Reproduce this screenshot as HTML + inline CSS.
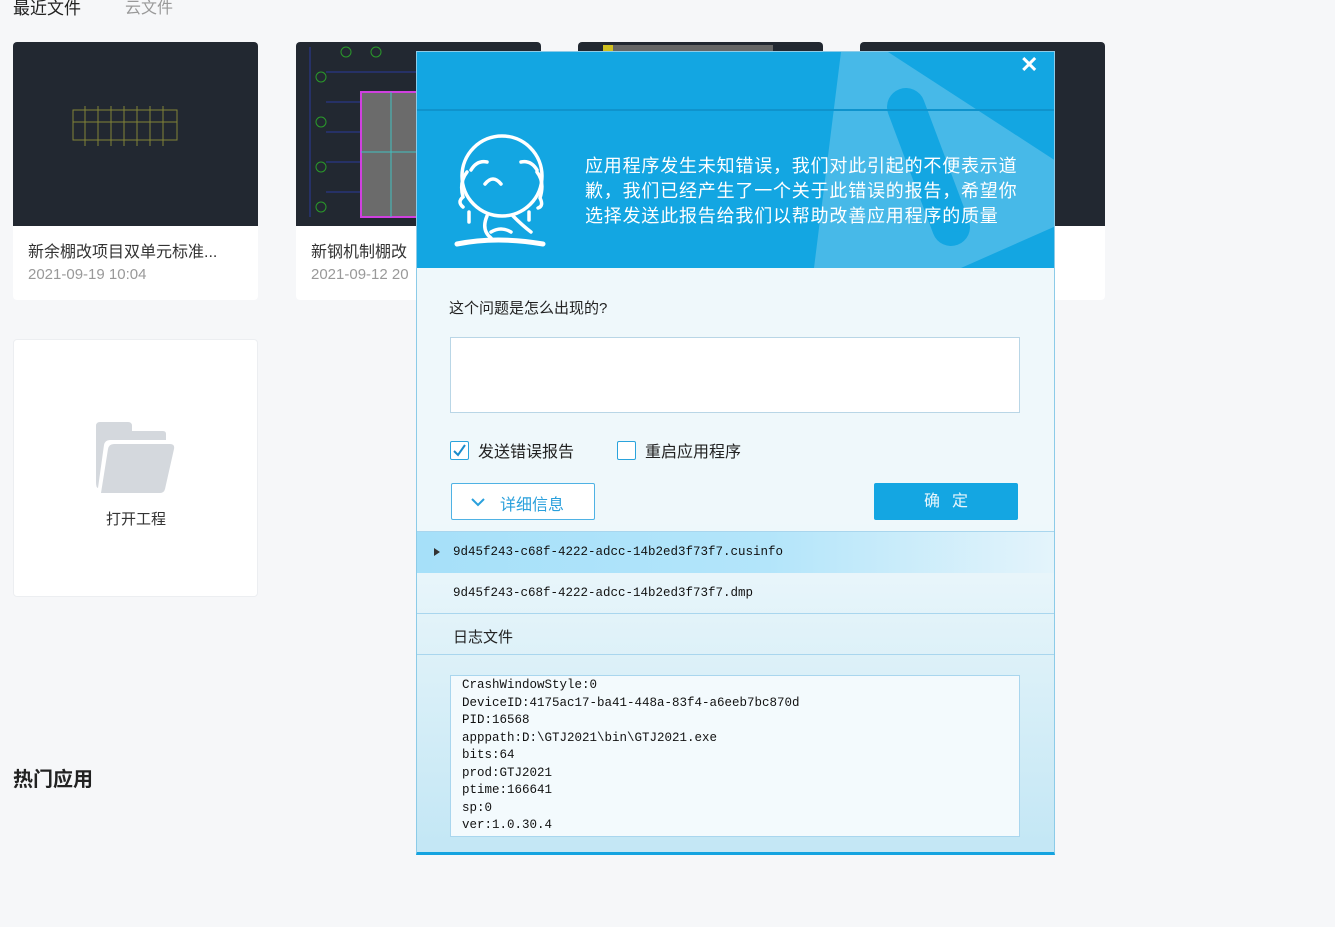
<!DOCTYPE html>
<html><head><meta charset="utf-8"><style>
*{margin:0;padding:0;box-sizing:border-box}
body{width:1335px;height:927px;background:#f6f7f9;position:relative;overflow:hidden;font-family:"Liberation Sans","Noto Sans CJK SC",sans-serif;color:#333}
.abs{position:absolute}
.card{position:absolute;top:42px;width:245px;height:258px;background:#fff;border-radius:4px;overflow:hidden}
.thumb{height:184px;background:#222831}
.t1{position:absolute;left:15px;top:196px;font-size:16px;color:#333;white-space:nowrap}
.t2{position:absolute;left:15px;top:224px;font-size:15px;color:#999}
.mono{font-family:"Liberation Mono","Noto Serif CJK SC",monospace;font-size:12.5px;color:#111}
</style></head><body>
<div class="abs" style="left:13px;top:-6px;font-size:17px;color:#222">最近文件</div>
<div class="abs" style="left:125px;top:-6px;font-size:16px;color:#999">云文件</div>

<div class="card" style="left:13px"><div class="thumb">
<svg width="245" height="184"><g stroke="#9a9a3a" stroke-width="1" fill="none" opacity=".8"><rect x="60" y="68" width="104" height="30"/><path d="M72 64v40M85 64v40M98 64v40M111 64v40M124 64v40M137 64v40M150 64v40M60 80h104"/></g></svg>
</div><div class="t1">新余棚改项目双单元标准...</div><div class="t2">2021-09-19 10:04</div></div>

<div class="card" style="left:296px"><div class="thumb" style="position:relative">
<svg width="245" height="184"><g stroke="#2b3a9a" fill="none"><path d="M14 5v170M30 30h210M30 60h210M30 90h210M30 120h210M30 150h210"/></g><rect x="65" y="50" width="120" height="125" fill="#6b6b6b"/><rect x="65" y="50" width="120" height="125" fill="none" stroke="#d040e0" stroke-width="2"/><g stroke="#40c0c0"><path d="M95 50v125M65 110h120"/></g><g fill="none" stroke="#2a9a2a"><circle cx="25" cy="35" r="5"/><circle cx="25" cy="80" r="5"/><circle cx="25" cy="125" r="5"/><circle cx="25" cy="165" r="5"/><circle cx="50" cy="10" r="5"/><circle cx="80" cy="10" r="5"/></g></svg>
</div><div class="t1">新钢机制棚改</div><div class="t2">2021-09-12 20</div></div>

<div class="card" style="left:578px"><div class="thumb"><svg width="245" height="20"><rect x="25" y="3" width="10" height="10" fill="#d0c020"/><rect x="35" y="3" width="160" height="10" fill="#666"/></svg></div></div>
<div class="card" style="left:860px"><div class="thumb"></div></div>

<div class="abs" style="left:13px;top:339px;width:245px;height:258px;background:#fff;border:1px solid #eceef1;border-radius:4px">
<svg class="abs" style="left:82px;top:82px" width="82" height="72"><path d="M0 4q0-4 4-4h28q4 0 4 4v5h31q3 0 3 3v6H14q-5 0-6 5L2 66Q0 66 0 60z" fill="#d4d8dd"/><path d="M12 27q1-5 6-5h56q5 0 4 5l-9 40q-1 4-5 4H5z" fill="#d4d8dd"/></svg>
<div class="abs" style="left:92px;top:168px;font-size:15px;color:#333">打开工程</div></div>

<div class="abs" style="left:13px;top:763px;font-size:20px;font-weight:bold;color:#222">热门应用</div>

<div class="abs" style="left:416px;top:51px;width:639px;height:804px;background:linear-gradient(#eff8fb 0,#eff8fb 470px,#c4e7f5 790px);border:1px solid #8ccbe8;border-bottom:3px solid #14a3e0;overflow:hidden">
 <div class="abs" style="left:0;top:0;width:639px;height:216px;background:#13a6e2;overflow:hidden">
  <svg class="abs" style="left:0;top:0" width="639" height="216"><polygon points="424,0 471,0 639,109 639,174 544,216 397,216" fill="#47b9e8"/><path d="M489 55 L534 175" stroke="#13a6e2" stroke-width="38" stroke-linecap="round"/><circle cx="540" cy="170" r="10" fill="#13a6e2"/><rect x="0" y="57" width="639" height="2" fill="#0f93cc"/></svg>
  <div class="abs" style="left:603px;top:0px;font-size:22px;font-weight:bold;color:#fff">✕</div>
  <svg class="abs" style="left:32px;top:80px" width="105" height="118" fill="none" stroke="#fff" stroke-width="3.5" stroke-linecap="round"><circle cx="53" cy="44" r="40"/><path d="M18 40q-8 10 -4 25q-6 5 0 10M88 40q8 10 3 26q4 8-2 10"/><path d="M22 38q6-10 16-8M72 30q10-2 16 8"/><path d="M36 52q8-10 16 0"/><path d="M20 80v10M80 80v8"/><path d="M38 84q-6 14 4 22M64 84q10 10 18 16M42 100q10-6 20 0"/><path d="M8 112q40-8 86 0" stroke-width="5"/></svg>
  <div class="abs" style="left:168px;top:102px;width:450px;font-size:18px;letter-spacing:.8px;line-height:25px;color:#fff">应用程序发生未知错误，我们对此引起的不便表示道歉，我们已经产生了一个关于此错误的报告，希望你选择发送此报告给我们以帮助改善应用程序的质量</div>
 </div>
 <div class="abs" style="left:32px;top:245px;font-size:15px;color:#222">这个问题是怎么出现的?</div>
 <div class="abs" style="left:33px;top:285px;width:570px;height:76px;background:#fff;border:1px solid #b9d6e6"></div>
 <div class="abs" style="left:33px;top:389px;width:19px;height:19px;border:1px solid #2aa3dc;background:#fff;border-radius:2px"><svg width="17" height="17"><path d="M3 9l4 4 7-10" stroke="#1a8ccc" stroke-width="2" fill="none"/></svg></div>
 <div class="abs" style="left:61px;top:386px;font-size:16px;color:#222">发送错误报告</div>
 <div class="abs" style="left:200px;top:389px;width:19px;height:19px;border:1px solid #2aa3dc;background:#fff;border-radius:2px"></div>
 <div class="abs" style="left:228px;top:386px;font-size:16px;color:#222">重启应用程序</div>
 <div class="abs" style="left:34px;top:431px;width:144px;height:37px;border:1px solid #4fb2e4;border-radius:2px;background:#fff"><svg class="abs" style="left:18px;top:13px" width="16" height="10"><path d="M2 2l6 6 6-6" stroke="#2aa0dc" stroke-width="2" fill="none"/></svg><div class="abs" style="left:48px;top:7px;font-size:16px;color:#2aa0dc">详细信息</div></div>
 <div class="abs" style="left:457px;top:431px;width:144px;height:37px;background:#14a6e2;border-radius:2px;color:#e8f6fc;font-size:16px;text-align:center;line-height:37px;letter-spacing:12px;padding-left:12px">确定</div>
 <div class="abs" style="left:0;top:479px;width:639px;height:1px;background:#a9d6ee"></div>
 <div class="abs" style="left:0;top:480px;width:639px;height:41px;background:linear-gradient(90deg,#a6e0f9,#b3e5fa 55%,#e4f4fb)"></div>
 <div class="abs" style="left:17px;top:496px;width:0;height:0;border-left:6px solid #333;border-top:4px solid transparent;border-bottom:4px solid transparent"></div>
 <div class="abs mono" style="left:36px;top:493px">9d45f243-c68f-4222-adcc-14b2ed3f73f7.cusinfo</div>
 <div class="abs mono" style="left:36px;top:534px">9d45f243-c68f-4222-adcc-14b2ed3f73f7.dmp</div>
 <div class="abs" style="left:0;top:561px;width:639px;height:1px;background:#a9d6ee"></div>
 <div class="abs" style="left:36px;top:574px;font-size:15px;color:#222">日志文件</div>
 <div class="abs" style="left:0;top:602px;width:639px;height:1px;background:#a9d6ee"></div>
 <div class="abs mono" style="left:33px;top:623px;width:570px;height:162px;background:#f3fafd;border:1px solid #a9d6ee;padding:1px 11px;line-height:17.5px;white-space:pre">CrashWindowStyle:0
DeviceID:4175ac17-ba41-448a-83f4-a6eeb7bc870d
PID:16568
apppath:D:\GTJ2021\bin\GTJ2021.exe
bits:64
prod:GTJ2021
ptime:166641
sp:0
ver:1.0.30.4</div>
</div>
</body></html>
